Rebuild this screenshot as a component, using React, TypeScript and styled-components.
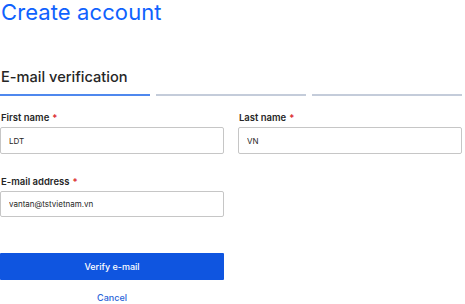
import React from 'react';
import styled, { createGlobalStyle } from 'styled-components';

const GlobalStyle = createGlobalStyle`
  body {
    margin: 0;
    background: #ffffff;
    font-family: "Inter", "Noto Sans", "Liberation Sans", sans-serif;
  }
`;

const Page = styled.div`
  width: 463px;
  display: flex;
  flex-direction: column;
`;

const Title = styled.h1`
  margin: 0;
  padding-left: 1px;
  font-size: 22px;
  line-height: 24px;
  font-weight: 400;
  color: #0f62fe;
  letter-spacing: 0.1px;
`;

const StepTitle = styled.h2`
  margin: 43px 0 0;
  padding-left: 1px;
  font-size: 14.6px;
  line-height: 20px;
  font-weight: 500;
  color: #262626;
`;

const Steps = styled.div`
  display: grid;
  grid-template-columns: repeat(3, 150px);
  gap: 6px;
  margin-top: 7px;
`;

const Step = styled.div<{ $active?: boolean }>`
  height: 2px;
  background: ${(p) => (p.$active ? '#4f88ee' : '#c4ccda')};
`;

const Row = styled.div<{ $gap?: number }>`
  display: grid;
  grid-template-columns: 224px 224px;
  gap: 14px;
  margin-top: ${(p) => p.$gap ?? 15}px;
`;

const Field = styled.div`
  display: flex;
  flex-direction: column;
`;

const Label = styled.label`
  font-size: 9.5px;
  line-height: 13px;
  font-weight: 600;
  color: #262626;
  margin-bottom: 3px;
  padding-left: 1px;
`;

const Req = styled.span`
  color: #da1e28;
  margin-left: 3px;
`;

const Input = styled.input<{ $h?: number }>`
  box-sizing: border-box;
  height: ${(p) => p.$h ?? 27}px;
  width: 224px;
  border: 1px solid #c6c6c6;
  border-radius: 2px;
  padding: 0 8px;
  font-family: inherit;
  font-size: 8px;
  color: #262626;
  background: #fff;
  outline: none;
`;

const Button = styled.button`
  box-sizing: border-box;
  margin-top: 36px;
  width: 224px;
  height: 27px;
  border: 0;
  border-radius: 1px;
  background: #0f55e0;
  color: #ffffff;
  font-family: inherit;
  font-size: 9px;
  font-weight: 500;
  cursor: pointer;
`;

const Cancel = styled.a`
  display: block;
  width: 224px;
  margin-top: 12px;
  text-align: center;
  font-size: 9px;
  line-height: 12px;
  font-weight: 500;
  color: #2a64d8;
  cursor: pointer;
`;

export default function App() {
  return (
    <>
      <GlobalStyle />
      <Page>
        <Title>Create account</Title>
        <StepTitle>E-mail verification</StepTitle>
        <Steps>
          <Step $active />
          <Step />
          <Step />
        </Steps>
        <Row>
          <Field>
            <Label>First name<Req>*</Req></Label>
            <Input defaultValue="LDT" />
          </Field>
          <Field>
            <Label>Last name<Req>*</Req></Label>
            <Input defaultValue="VN" />
          </Field>
        </Row>
        <Row $gap={21}>
          <Field>
            <Label>E-mail address<Req>*</Req></Label>
            <Input $h={26} defaultValue="vantan@tstvietnam.vn" />
          </Field>
        </Row>
        <Button>Verify e-mail</Button>
        <Cancel>Cancel</Cancel>
      </Page>
    </>
  );
}
